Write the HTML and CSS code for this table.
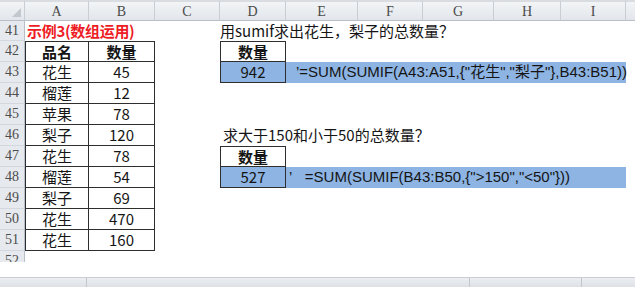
FILE: index.html
```html
<!DOCTYPE html>
<html>
<head>
<meta charset="utf-8">
<link rel="stylesheet" href="styles.css">
</head>
<body>
<div class="sheet">
  <div class="hdr corner"><svg class="tri" width="9" height="9" viewBox="0 0 9 9"><polygon points="9,0 9,9 0,9" fill="#c3c8cf"/></svg></div>
  <div class="hdr">A</div><div class="hdr">B</div><div class="hdr">C</div><div class="hdr">D</div><div class="hdr">E</div><div class="hdr">F</div><div class="hdr">G</div><div class="hdr">H</div><div class="hdr">I</div><div class="hdr last"></div>

  <div class="rh">41</div><div class="c title s2">示例3(数组运用)</div><div class="c"></div><div class="c s7">用sumif求出花生，梨子的总数量？</div>

  <div class="rh">42</div><div class="c tb first top th">品名</div><div class="c tb top th">数量</div><div class="c"></div><div class="c tb first top th">数量</div><div class="c s6"></div>

  <div class="rh">43</div><div class="c tb first">花生</div><div class="c tb">45</div><div class="c"></div><div class="c tb first blue">942</div><div class="c s5 blue formula f1">’=SUM(SUMIF(A43:A51,{"花生","梨子"},B43:B51))</div><div class="c"></div>

  <div class="rh">44</div><div class="c tb first">榴莲</div><div class="c tb">12</div><div class="c s8"></div>

  <div class="rh">45</div><div class="c tb first">苹果</div><div class="c tb">78</div><div class="c s8"></div>

  <div class="rh">46</div><div class="c tb first">梨子</div><div class="c tb">120</div><div class="c"></div><div class="c s7 q">求大于150和小于50的总数量？</div>

  <div class="rh">47</div><div class="c tb first">花生</div><div class="c tb">78</div><div class="c"></div><div class="c tb first top th">数量</div><div class="c s6"></div>

  <div class="rh">48</div><div class="c tb first">榴莲</div><div class="c tb">54</div><div class="c"></div><div class="c tb first blue">527</div><div class="c s5 blue formula f2">’&nbsp;&nbsp;&nbsp;=SUM(SUMIF(B43:B50,{"&gt;150","&lt;50"}))</div><div class="c"></div>

  <div class="rh">49</div><div class="c tb first">梨子</div><div class="c tb">69</div><div class="c s8"></div>

  <div class="rh">50</div><div class="c tb first">花生</div><div class="c tb">470</div><div class="c s8"></div>

  <div class="rh">51</div><div class="c tb first">花生</div><div class="c tb">160</div><div class="c s8"></div>

  <div class="rh cut">52</div><div class="c s10"></div>
</div>
<div class="gap"></div>
<div class="bar">
  <div class="seg s-a"></div>
  <div class="seg s-b"></div>
  <div class="seg s-c"></div>
  <div class="seg s-d"></div>
</div>
</body>
</html>
```
FILE: styles.css
```css
html, body {
  margin: 0;
  padding: 0;
  background: #fff;
  font-family: "Noto Sans CJK SC", sans-serif;
  overflow: hidden;
}

.sheet {
  display: grid;
  grid-template-columns: 25px 64px 66px 65px 66px 72px 65px 71px 67px 65px 1fr;
  grid-template-rows: 21px 20px repeat(10, 21px) 11px;
}

.hdr {
  box-sizing: border-box;
  background: linear-gradient(#f2f4f6, #e2e6eb);
  border-top: 2px solid #d9dde2;
  border-right: 1px solid #c9ced5;
  border-bottom: 1px solid #b8bfc8;
  font: 14px "Liberation Serif", serif;
  color: #4a4a4a;
  display: flex;
  align-items: center;
  justify-content: center;
  padding-top: 1px;
}

.hdr.last {
  border-right: none;
}

.corner {
  position: relative;
}

.tri {
  position: absolute;
  right: 3px;
  bottom: 3px;
}

.rh {
  box-sizing: border-box;
  background: #e6e9ed;
  border-right: 1px solid #b8bfc8;
  border-bottom: 1px solid #d3d8de;
  font: 14px "Liberation Serif", serif;
  color: #4d4d4d;
  text-align: center;
  line-height: 20px;
  overflow: hidden;
}

.rh.cut {
  border-bottom: none;
}

.c {
  box-sizing: border-box;
  font-size: 15px;
  line-height: 20px;
  color: #151515;
  white-space: nowrap;
  min-width: 0;
}

.s2 { grid-column: span 2; }
.s5 { grid-column: span 5; }
.s6 { grid-column: span 6; }
.s7 { grid-column: span 7; }
.s8 { grid-column: span 8; }
.s10 { grid-column: span 10; }

.title {
  color: #ee1c25;
  font-weight: bold;
  padding-left: 2px;
  letter-spacing: -0.3px;
}

.q {
  padding-left: 3px;
}

.tb {
  text-align: center;
  border-right: 1px solid #2e2e2e;
  border-bottom: 1px solid #2e2e2e;
}

.tb.first {
  border-left: 1px solid #2e2e2e;
}

.tb.top {
  border-top: 1px solid #2e2e2e;
  line-height: 19px;
}

.th {
  font-weight: bold;
}

.blue {
  background: #8db4e2;
}

.formula {
  font-family: "Liberation Sans Narrow", "Liberation Sans", "Noto Sans CJK SC", sans-serif;
  font-size: 15px;
  letter-spacing: 0;
}

.f1 {
  padding-left: 10px;
}

.f2 {
  padding-left: 3px;
}

.gap {
  height: 15px;
}

.bar {
  height: 10px;
  box-sizing: border-box;
  background: linear-gradient(#eceef1, #dde1e6);
  border-top: 1px solid #c8cdd3;
  display: flex;
}

.seg {
  border-right: 1px solid #c3c8cf;
  height: 100%;
  box-sizing: border-box;
}

.s-a { width: 87px; }
.s-b { width: 383px; }
.s-c { width: 112px; }
.s-d { flex: 1; border-right: none; }
```
